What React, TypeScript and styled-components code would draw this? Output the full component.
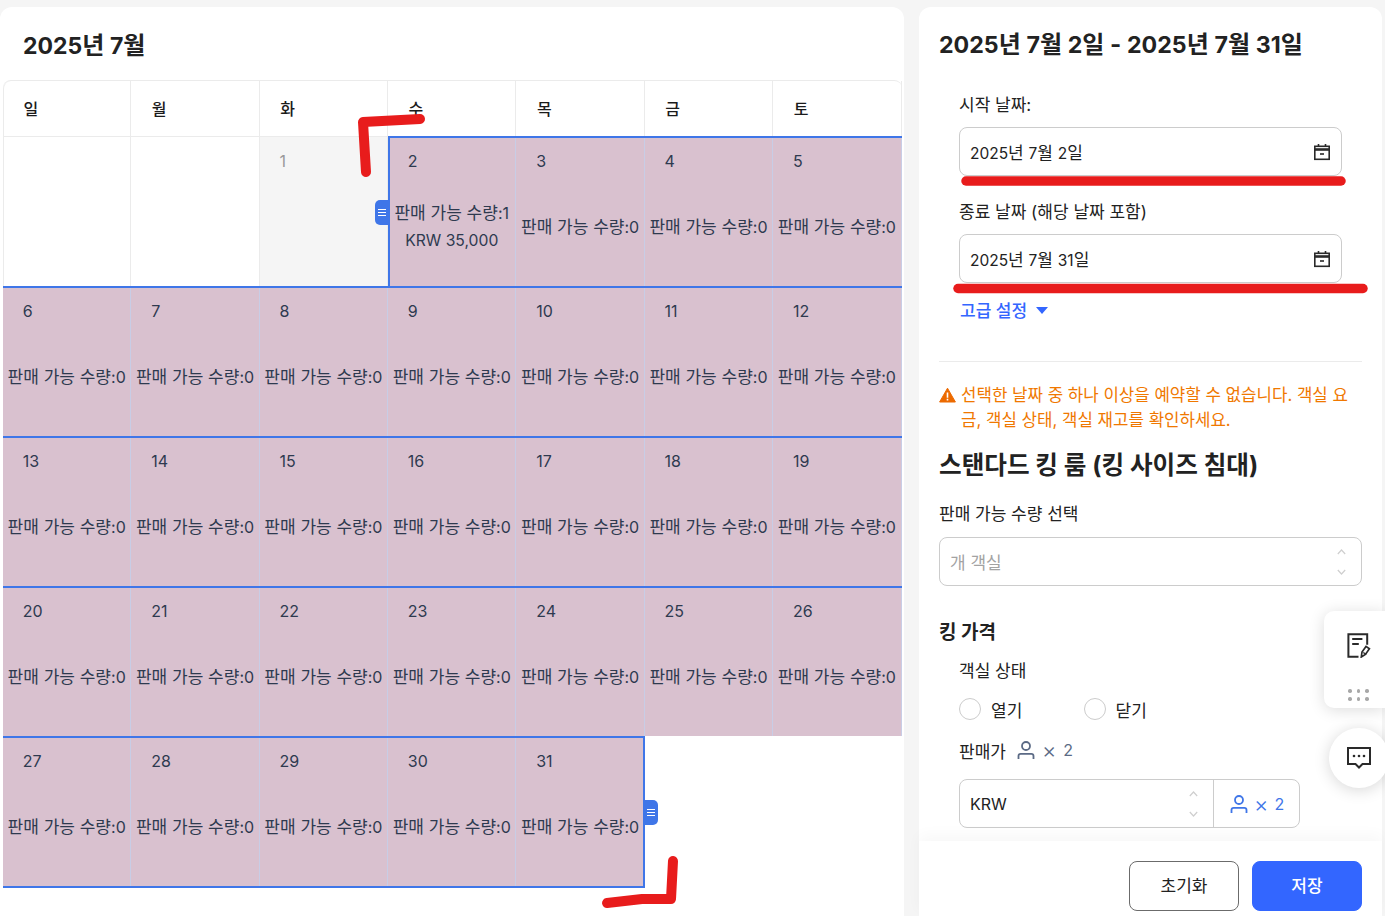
import React from "react";
import styled, { createGlobalStyle } from "styled-components";

const Global = createGlobalStyle`
  html, body { margin: 0; padding: 0; height: 100%; background: #f5f5f5; overflow: hidden; }
  * { box-sizing: border-box; }
  body { font-family: Inter, "Noto Sans CJK KR", "Noto Sans", sans-serif; color: #1f1f1f; }
`;

const Page = styled.div`
  position: relative;
  display: flex;
  align-items: stretch;
  height: 916px;
  width: 1385px;
  padding: 7px 3px 0 0;
  gap: 15px;
  overflow: hidden;
`;

/* Latin letters and digits run a little smaller than the Hangul around them. */
const Latin = styled.span<{ $size?: number }>`
  font-size: ${(p) => p.$size ?? 16}px;
`;

const CalendarCard = styled.section`
  width: 904px;
  background: #fff;
  border-radius: 12px 12px 0 0;
  padding-left: 3px;
`;

const MonthTitle = styled.h2`
  margin: 0;
  height: 73px;
  padding: 22px 0 0 20px;
  font-size: 24px;
  line-height: 34px;
  font-weight: 700;
  color: #222;
`;

const WeekRow = styled.div`
  display: grid;
  grid-template-columns: repeat(7, 1fr);
  width: 898.5px;
  height: 56px;
  border-top: 1px solid #ebebeb;
  border-radius: 8px 8px 0 0;
`;

const WeekCell = styled.div<{ $first?: boolean }>`
  padding: 16px 0 0 ${(p) => (p.$first ? "19.5px" : "20.5px")};
  font-size: 16px;
  line-height: 24px;
  font-weight: 500;
  color: #1b1b1b;
  border-right: 1px solid #ebebeb;
  border-left: ${(p) => (p.$first ? "1px solid #ebebeb" : "0")};
  border-radius: ${(p) => (p.$first ? "8px 0 0 0" : "0")};
`;

const Weeks = styled.div`
  display: grid;
  grid-template-columns: repeat(7, 1fr);
  grid-auto-rows: 150px;
  width: 898.5px;
`;

type Kind = "blank" | "empty" | "past" | "open";

const DayCell = styled.div<{ $kind: Kind; $first?: boolean }>`
  position: relative;
  display: flex;
  flex-direction: column;
  padding-bottom: 4px;
  background: ${(p) => (p.$kind === "open" ? "#d9c1cf" : p.$kind === "past" ? "#f5f5f5" : "#fff")};
  border-top: ${(p) => (p.$kind === "empty" ? "0" : "1px solid #ebebeb")};
  border-right: ${(p) =>
    p.$kind === "empty" ? "0" : p.$kind === "open" ? "1px solid #c8cde6" : "1px solid #ebebeb"};
  border-left: ${(p) => (p.$first && p.$kind === "blank" ? "1px solid #ebebeb" : "0")};
`;

const RangeEdge = styled.span<{ $left?: boolean; $flush?: boolean; $right?: boolean; $bottom?: boolean }>`
  position: absolute;
  top: -1px;
  left: ${(p) => (p.$left || p.$flush ? "0" : "-1px")};
  right: -1px;
  bottom: ${(p) => (p.$bottom ? "-2px" : "0")};
  border-top: 2px solid #3f76e8;
  border-left: ${(p) => (p.$left ? "2px solid #3f76e8" : "0")};
  border-right: ${(p) => (p.$right ? "2px solid #3f76e8" : "0")};
  border-bottom: ${(p) => (p.$bottom ? "2px solid #3f76e8" : "0")};
  pointer-events: none;
`;

const Handle = styled.span<{ $side: "left" | "right" }>`
  position: absolute;
  z-index: 2;
  top: 63px;
  ${(p) => (p.$side === "left" ? "left: -13px; width: 13px;" : "right: -14px; width: 14px;")}
  height: 25px;
  background: #3f76e8;
  border-radius: ${(p) => (p.$side === "left" ? "5px 0 0 5px" : "0 5px 5px 0")};
  display: flex;
  flex-direction: column;
  align-items: center;
  justify-content: center;
  gap: 2px;
  & > i {
    display: block;
    width: 8px;
    height: 1px;
    background: #fff;
  }
`;

const DayNumber = styled.div<{ $muted?: boolean }>`
  margin-top: 14px;
  padding-left: 19.8px;
  height: 20px;
  font-size: 16px;
  line-height: 20px;
  color: ${(p) => (p.$muted ? "#999" : "#2e3a4f")};
`;

const DayInfo = styled.div`
  flex: 1;
  display: flex;
  flex-direction: column;
  justify-content: center;
  align-items: center;
  font-size: 17px;
  line-height: 28px;
  white-space: nowrap;
  color: #2e3a4f;
`;

const SidePanel = styled.aside`
  flex: 1;
  display: flex;
  flex-direction: column;
  background: #fff;
  border-radius: 12px 12px 0 0;
  min-width: 0;
`;

const SideBody = styled.div`
  flex: 1;
  padding: 22px 20px 0 20px;
  overflow: hidden;
`;

const RangeTitle = styled.h2`
  margin: 0 0 30px;
  font-size: 24px;
  line-height: 32px;
  height: 34px;
  font-weight: 700;
  color: #222;
  white-space: nowrap;
`;

const Indented = styled.div`
  padding-left: 20px;
`;

const FieldLabel = styled.div<{ $gap?: number; $top?: number }>`
  font-size: 17px;
  line-height: 24px;
  color: #222;
  margin-top: ${(p) => p.$top ?? 0}px;
  margin-bottom: ${(p) => p.$gap ?? 10}px;
`;

const DateInput = styled.div`
  display: flex;
  align-items: center;
  justify-content: space-between;
  width: 383px;
  height: 49px;
  padding: 0 10px 0 10px;
  margin-bottom: 24px;
  border: 1px solid #ccc;
  border-radius: 8px;
  font-size: 17px;
  color: #222;
`;

const AdvancedLink = styled.div`
  display: flex;
  align-items: center;
  gap: 9px;
  margin-top: -8px;
  padding-left: 1px;
  font-size: 17px;
  line-height: 24px;
  font-weight: 500;
  color: #3366ff;
`;

const Caret = styled.span`
  width: 0;
  height: 0;
  border-left: 6px solid transparent;
  border-right: 6px solid transparent;
  border-top: 7px solid #3366ff;
  margin-bottom: 2px;
`;

const Divider = styled.hr`
  margin: 38px 0 21px;
  border: 0;
  border-top: 1px solid #ebebeb;
`;

const Warning = styled.div`
  display: flex;
  gap: 5px;
  font-size: 16.8px;
  line-height: 25px;
  color: #f07800;
  & > svg {
    flex: none;
    margin-top: 4px;
  }
`;

const RoomTitle = styled.h3`
  margin: 14px 0 0;
  font-size: 24.6px;
  line-height: 36px;
  font-weight: 700;
  color: #222;
`;

const PlainLabel = styled.div`
  margin-top: 19px;
  margin-bottom: 11px;
  font-size: 17px;
  line-height: 24px;
  color: #222;
`;

const InputBox = styled.div<{ $width?: number }>`
  display: flex;
  align-items: center;
  height: 49px;
  width: ${(p) => (p.$width ? `${p.$width}px` : "100%")};
  border: 1px solid #ccc;
  border-radius: 8px;
  font-size: 17px;
`;

const InputMain = styled.div<{ $muted?: boolean }>`
  flex: 1;
  display: flex;
  align-items: center;
  justify-content: space-between;
  height: 100%;
  padding: 0 15.5px 0 10px;
  color: ${(p) => (p.$muted ? "#a3a3a3" : "#222")};
`;

const Spin = styled.span`
  display: flex;
  flex-direction: column;
  gap: 14px;
  color: #cfcfcf;
`;

const Addon = styled.div`
  display: flex;
  align-items: center;
  gap: 6px;
  width: 86px;
  height: 100%;
  padding-left: 16px;
  border-left: 1px solid #ccc;
  color: #3f76e8;
`;

const TimesSign = styled.span`
  font-size: 22px;
  line-height: 1;
  font-weight: 300;
`;

const PriceTitle = styled.h4`
  margin: 33px 0 0;
  font-size: 19px;
  line-height: 28px;
  font-weight: 700;
  color: #222;
`;

const RadioRow = styled.div`
  display: flex;
  align-items: center;
  margin: 14px 0 17px;
  height: 24px;
`;

const Radio = styled.span<{ $width: number }>`
  display: flex;
  align-items: center;
  gap: 10px;
  width: ${(p) => p.$width}px;
  font-size: 17px;
  color: #222;
  &::before {
    content: "";
    width: 20px;
    height: 20px;
    border: 1px solid #ccc;
    border-radius: 50%;
  }
`;

const PriceLabel = styled.div`
  display: flex;
  align-items: center;
  gap: 11px;
  height: 24px;
  margin-bottom: 17px;
  font-size: 17px;
  color: #222;
`;

const Times = styled.span`
  display: inline-flex;
  align-items: center;
  gap: 7px;
  color: #5b6a85;
`;

const Footer = styled.div`
  position: relative;
  flex: none;
  display: flex;
  justify-content: flex-end;
  gap: 13px;
  height: 75px;
  padding: 20px 20px 0 0;
  background: #fff;
  box-shadow: 0 -6px 14px rgba(0, 0, 0, 0.03);
`;

const Button = styled.button<{ $primary?: boolean }>`
  width: 110px;
  height: 50px;
  padding: 0 0 3px;
  border-radius: 8px;
  border: 1px solid ${(p) => (p.$primary ? "#3366ff" : "#6b6b6b")};
  background: ${(p) => (p.$primary ? "#3366ff" : "#fff")};
  color: ${(p) => (p.$primary ? "#fff" : "#222")};
  font: ${(p) => (p.$primary ? 500 : 400)} 17px Inter, "Noto Sans CJK KR", sans-serif;
`;

const FloatCard = styled.div`
  position: fixed;
  top: 611px;
  right: 0;
  width: 61px;
  height: 97px;
  background: #fff;
  border-radius: 10px 0 0 10px;
  box-shadow: 0 2px 16px rgba(0, 0, 0, 0.14);
  display: flex;
  flex-direction: column;
  align-items: center;
  padding: 22px 0 0 8px;
  gap: 31px;
`;

const Grip = styled.div`
  display: grid;
  grid-template-columns: repeat(3, 3.5px);
  gap: 4.5px 5px;
  & > i {
    width: 3.5px;
    height: 3.5px;
    border-radius: 50%;
    background: #a8a8a8;
  }
`;

const ChatBubble = styled.div`
  position: fixed;
  top: 728px;
  left: 1329px;
  width: 60px;
  height: 60px;
  border-radius: 50%;
  background: #fff;
  box-shadow: 0 2px 16px rgba(0, 0, 0, 0.16);
  display: flex;
  align-items: center;
  justify-content: center;
`;

const Marks = styled.svg`
  position: fixed;
  inset: 0;
  width: 1385px;
  height: 916px;
  pointer-events: none;
  z-index: 5;
`;

const CalendarIcon = () => (
  <svg width="18" height="18" viewBox="0 0 18 18" fill="none" stroke="#2a2a2a" strokeWidth="1.6">
    <rect x="1.8" y="3.3" width="14.4" height="13" />
    <path d="M1.8 6.5h14.4" strokeWidth="2.6" />
    <path d="M5.5 1v3M12.5 1v3" />
    <path d="M7 11h4" />
  </svg>
);

const Person = ({ color }: { color: string }) => (
  <svg width="18" height="18" viewBox="0 0 18 18" fill="none" stroke={color} strokeWidth="1.8">
    <circle cx="9" cy="5" r="4" />
    <path d="M1.5 18v-3q0-2.2 2.2-2.2h10.6q2.2 0 2.2 2.2v3" />
  </svg>
);

const Chevrons = () => (
  <Spin>
    <svg width="9" height="6" viewBox="0 0 9 6" fill="none" stroke="currentColor" strokeWidth="1.2">
      <path d="M.8 5l3.7-4 3.7 4" />
    </svg>
    <svg width="9" height="6" viewBox="0 0 9 6" fill="none" stroke="currentColor" strokeWidth="1.2">
      <path d="M.8 1l3.7 4 3.7-4" />
    </svg>
  </Spin>
);

const Lines = () => (
  <>
    <i />
    <i />
    <i />
  </>
);

const names = ["일", "월", "화", "수", "목", "금", "토"];

type Cell = { day?: number };
const cells: Cell[] = [
  {},
  {},
  ...Array.from({ length: 31 }, (_, i) => ({ day: i + 1 })),
  {},
  {},
];

export default function App() {
  return (
    <Page>
      <Global />
      <CalendarCard>
        <MonthTitle>
          <Latin $size={23}>2025</Latin>년 <Latin $size={23}>7</Latin>월
        </MonthTitle>
        <WeekRow>
          {names.map((n, i) => (
            <WeekCell key={n} $first={i === 0}>
              {n}
            </WeekCell>
          ))}
        </WeekRow>
        <Weeks>
          {cells.map((c, i) => {
            const first = i % 7 === 0;
            if (!c.day) {
              return <DayCell key={i} $kind={i < 2 ? "blank" : "empty"} $first={first} />;
            }
            if (c.day === 1) {
              return (
                <DayCell key={i} $kind="past">
                  <DayNumber $muted>1</DayNumber>
                </DayCell>
              );
            }
            const isStart = c.day === 2;
            const isEnd = c.day === 31;
            return (
              <DayCell key={i} $kind="open" $first={first}>
                <RangeEdge $left={isStart} $flush={first} $right={isEnd} $bottom={c.day >= 25} />
                {isStart && (
                  <Handle $side="left">
                    <Lines />
                  </Handle>
                )}
                {isEnd && (
                  <Handle $side="right">
                    <Lines />
                  </Handle>
                )}
                <DayNumber>{c.day}</DayNumber>
                <DayInfo>
                  <span>
                    판매 가능 수량<Latin>:{isStart ? 1 : 0}</Latin>
                  </span>
                  {isStart && <Latin $size={15.7}>KRW 35,000</Latin>}
                </DayInfo>
              </DayCell>
            );
          })}
        </Weeks>
      </CalendarCard>

      <SidePanel>
        <SideBody>
          <RangeTitle>
            <Latin $size={23.2}>2025</Latin>년 <Latin $size={23.2}>7</Latin>월 <Latin $size={23.2}>2</Latin>일 -{" "}
            <Latin $size={23.2}>2025</Latin>년 <Latin $size={23.2}>7</Latin>월 <Latin $size={23.2}>31</Latin>일
          </RangeTitle>
          <Indented>
            <FieldLabel>시작 날짜:</FieldLabel>
            <DateInput>
              <span>
                <Latin $size={15.5}>2025</Latin>년 <Latin $size={15.5}>7</Latin>월 <Latin $size={15.5}>2</Latin>일
              </span>
              <CalendarIcon />
            </DateInput>
            <FieldLabel>종료 날짜 (해당 날짜 포함)</FieldLabel>
            <DateInput>
              <span>
                <Latin $size={15.5}>2025</Latin>년 <Latin $size={15.5}>7</Latin>월 <Latin $size={15.5}>31</Latin>일
              </span>
              <CalendarIcon />
            </DateInput>
            <AdvancedLink>
              고급 설정 <Caret />
            </AdvancedLink>
          </Indented>
          <Divider />
          <Warning>
            <svg width="17" height="16" viewBox="0 0 17 16">
              <path d="M8.5 1.2L16.4 15H.6z" fill="#ec6a00" stroke="#ec6a00" strokeLinejoin="round" />
              <path d="M7.7 5.5h1.6v5.2H7.7zM7.7 11.8h1.6v1.7H7.7z" fill="#fff" />
            </svg>
            <span>선택한 날짜 중 하나 이상을 예약할 수 없습니다. 객실 요금, 객실 상태, 객실 재고를 확인하세요.</span>
          </Warning>
          <RoomTitle>스탠다드 킹 룸 (킹 사이즈 침대)</RoomTitle>
          <PlainLabel>판매 가능 수량 선택</PlainLabel>
          <InputBox>
            <InputMain $muted>
              개 객실
              <Chevrons />
            </InputMain>
          </InputBox>
          <PriceTitle>킹 가격</PriceTitle>
          <Indented>
            <FieldLabel $gap={0} $top={12}>
              객실 상태
            </FieldLabel>
            <RadioRow>
              <Radio $width={124.5}>열기</Radio>
              <Radio $width={100}>닫기</Radio>
            </RadioRow>
            <PriceLabel>
              판매가
              <Times>
                <Person color="#5b6a85" />
                <TimesSign>×</TimesSign>
                <Latin>2</Latin>
              </Times>
            </PriceLabel>
            <InputBox $width={341}>
              <InputMain>
                <Latin>KRW</Latin>
                <Chevrons />
              </InputMain>
              <Addon>
                <Person color="#3f76e8" />
                <TimesSign>×</TimesSign>
                <Latin>2</Latin>
              </Addon>
            </InputBox>
          </Indented>
        </SideBody>
        <Footer>
          <Button>초기화</Button>
          <Button $primary>저장</Button>
        </Footer>
      </SidePanel>

      <FloatCard>
        <svg width="24" height="25" viewBox="0 0 24 25" fill="none" stroke="#2a2a2a" strokeWidth="2">
          <path d="M11.5 23.8H1.4V1.2h18.8v10.5" />
          <path d="M5.2 6h10.2M5.2 11h6.6" />
          <path d="M14.3 24l.7-5 4-5.6 3.4 2.4-4 5.6z" strokeWidth="1.7" />
          <path d="M16.3 19.5l3 2" strokeWidth="1.5" />
        </svg>
        <Grip>
          <i />
          <i />
          <i />
          <i />
          <i />
          <i />
        </Grip>
      </FloatCard>

      <ChatBubble>
        <svg width="24" height="22" viewBox="0 0 24 22" fill="none">
          <path d="M1 1h22v16h-7.5L12 20.5 8.5 17H1z" stroke="#2a2a2a" strokeWidth="2" />
          <circle cx="7" cy="9" r="1.3" fill="#2a2a2a" />
          <circle cx="12" cy="9" r="1.3" fill="#2a2a2a" />
          <circle cx="17" cy="9" r="1.3" fill="#2a2a2a" />
        </svg>
      </ChatBubble>

      <Marks viewBox="0 0 1385 916" fill="none" stroke="#e81c1c" strokeLinecap="round" strokeLinejoin="round">
        <path d="M420 119L363 122L366 172" strokeWidth="10" />
        <path d="M966 181H1341" strokeWidth="9.5" />
        <path d="M958 288.5H1363" strokeWidth="9.5" />
        <path d="M673 861L671 899L642 899L607 903" strokeWidth="10" />
      </Marks>
    </Page>
  );
}
